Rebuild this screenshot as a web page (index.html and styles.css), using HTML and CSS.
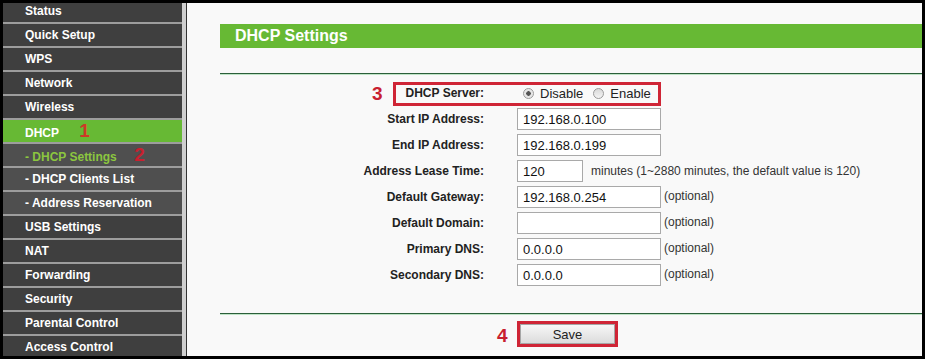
FILE: index.html
```html
<!DOCTYPE html>
<html lang="en">
<head>
    <meta charset="UTF-8">
    <meta name="viewport" content="width=device-width, initial-scale=1.0">
    <title>DHCP Settings</title>
    <link rel="stylesheet" href="styles.css">
</head>
<body>
    <div class="frame">
        <!-- Left menu -->
        <div class="sidebar">
            <ul class="menu">
                <li>Status</li>
                <li>Quick Setup</li>
                <li>WPS</li>
                <li>Network</li>
                <li>Wireless</li>
                <li class="active">DHCP <span class="num num-1">1</span></li>
                <li class="sub current">- DHCP Settings <span class="num num-2">2</span></li>
                <li class="sub">- DHCP Clients List</li>
                <li class="sub">- Address Reservation</li>
                <li>USB Settings</li>
                <li>NAT</li>
                <li>Forwarding</li>
                <li>Security</li>
                <li>Parental Control</li>
                <li>Access Control</li>
            </ul>
        </div>

        <!-- Main panel -->
        <div class="content">
            <div class="title-bar">DHCP Settings</div>
            <div class="rule"></div>

            <div class="form">
                <div class="form-row">
                    <span class="num num-3">3</span>
                    <div class="mark"></div>
                    <label>DHCP Server:</label>
                    <div class="field">
                        <span class="radio checked"></span>
                        <span class="radio-text">Disable</span>
                        <span class="radio"></span>
                        <span class="radio-text">Enable</span>
                    </div>
                </div>
                <div class="form-row">
                    <label>Start IP Address:</label>
                    <div class="field"><input type="text" value="192.168.0.100"></div>
                </div>
                <div class="form-row">
                    <label>End IP Address:</label>
                    <div class="field"><input type="text" value="192.168.0.199"></div>
                </div>
                <div class="form-row">
                    <label>Address Lease Time:</label>
                    <div class="field">
                        <input type="text" class="short" value="120">
                        <span class="hint wide">minutes (1~2880 minutes, the default value is 120)</span>
                    </div>
                </div>
                <div class="form-row">
                    <label>Default Gateway:</label>
                    <div class="field"><input type="text" value="192.168.0.254"><span class="hint">(optional)</span></div>
                </div>
                <div class="form-row">
                    <label>Default Domain:</label>
                    <div class="field"><input type="text" value=""><span class="hint">(optional)</span></div>
                </div>
                <div class="form-row">
                    <label>Primary DNS:</label>
                    <div class="field"><input type="text" value="0.0.0.0"><span class="hint">(optional)</span></div>
                </div>
                <div class="form-row">
                    <label>Secondary DNS:</label>
                    <div class="field"><input type="text" value="0.0.0.0"><span class="hint">(optional)</span></div>
                </div>
            </div>

            <div class="rule bottom"></div>

            <div class="save-row">
                <div class="save-box">
                    <span class="num num-4">4</span>
                    <button type="button" class="save-btn">Save</button>
                </div>
            </div>
        </div>
    </div>
</body>
</html>
```

FILE: styles.css
```css
* {
    margin: 0;
    padding: 0;
    box-sizing: border-box;
    font-family: 'Liberation Sans', Arial, Helvetica, sans-serif;
}

body {
    background: #000;
}

.frame {
    margin: 3px;
    width: 919px;
    height: 353px;
    display: flex;
    overflow: hidden;
    background: #f9f9f9;
}

/* Left menu */
.sidebar {
    width: 183px;
    flex-shrink: 0;
    background: #3f3f3f;
    border-right: 4px solid #cfcfcf;
    overflow: hidden;
}

.menu {
    list-style: none;
    margin-top: -3px;
}

.menu li {
    height: 24px;
    line-height: 22px;
    padding-left: 22px;
    border-bottom: 2px solid #9d9d9d;
    color: #fff;
    font-size: 12px;
    font-weight: bold;
    background: #3f3f3f;
    white-space: nowrap;
}

.menu li.active {
    background: #67b934;
}

.menu li.sub {
    background: #4f4f4f;
}

.menu li.current {
    color: #8cc63f;
}

/* Red annotation numbers */
.num {
    color: #c8202f;
    font-size: 19px;
    font-weight: bold;
}

.num-1 {
    margin-left: 17px;
    color: #cc3a26;
}

.num-2 {
    margin-left: 14px;
}

.num-3 {
    position: absolute;
    left: 152px;
    top: 3px;
    line-height: 22px;
}

.num-4 {
    position: absolute;
    left: -23px;
    top: 1px;
    line-height: 22px;
}

/* Main panel */
.content {
    flex: 1;
    border-left: 1px solid #333;
    padding-left: 33px;
}

.title-bar {
    margin-top: 21px;
    height: 24px;
    line-height: 24px;
    padding-left: 15px;
    background: #67b934;
    color: #fff;
    font-size: 16px;
    font-weight: bold;
}

.rule {
    margin-top: 25px;
    height: 2px;
    border-top: 1px solid #2c5f3a;
    border-bottom: 1px solid #bfe4c6;
}

.form {
    padding-top: 5px;
}

.form-row {
    position: relative;
    display: grid;
    grid-template-columns: 264px 1fr;
    column-gap: 33px;
    align-items: center;
    height: 26px;
}

.form-row label {
    text-align: right;
    color: #222;
    font-size: 12px;
    font-weight: bold;
}

.field {
    display: flex;
    align-items: center;
}

.field input {
    width: 144px;
    height: 22px;
    padding: 0 5px;
    border: 1px solid #a9a9a9;
    border-radius: 0;
    background: #fff;
    color: #111;
    font-size: 13px;
    outline: none;
}

.field input.short {
    width: 66px;
}

.hint {
    margin-left: 3px;
    margin-top: -3px;
    color: #333;
    font-size: 12px;
}

.hint.wide {
    margin-left: 8px;
    margin-top: 0;
}

/* Highlight box around the server row */
.mark {
    position: absolute;
    left: 173px;
    top: 2px;
    width: 268px;
    height: 24px;
    border: 3px solid #cf2536;
}

.radio {
    width: 11px;
    height: 11px;
    margin-left: 6px;
    border-radius: 50%;
    border: 1px solid #9a9a9a;
    background: linear-gradient(#d9d9d9, #f4f4f4);
}

.radio + .radio-text + .radio {
    margin-left: 10px;
}

.radio.checked {
    background: radial-gradient(circle, #555 0, #555 2px, #e2e2e2 2.5px, #f2f2f2 100%);
}

.radio-text {
    margin-left: 6px;
    color: #222;
    font-size: 13px;
}

/* Save */
.save-row {
    margin-top: 6px;
    padding-left: 297px;
}

.save-box {
    position: relative;
    width: 101px;
    height: 26px;
    border: 3px solid #cf2536;
}

.save-btn {
    display: block;
    width: 95px;
    height: 20px;
    border: 1px solid #a6a6a6;
    background: linear-gradient(#f7f7f7, #dcdcdc);
    color: #222;
    font-size: 13px;
    cursor: pointer;
}
```
